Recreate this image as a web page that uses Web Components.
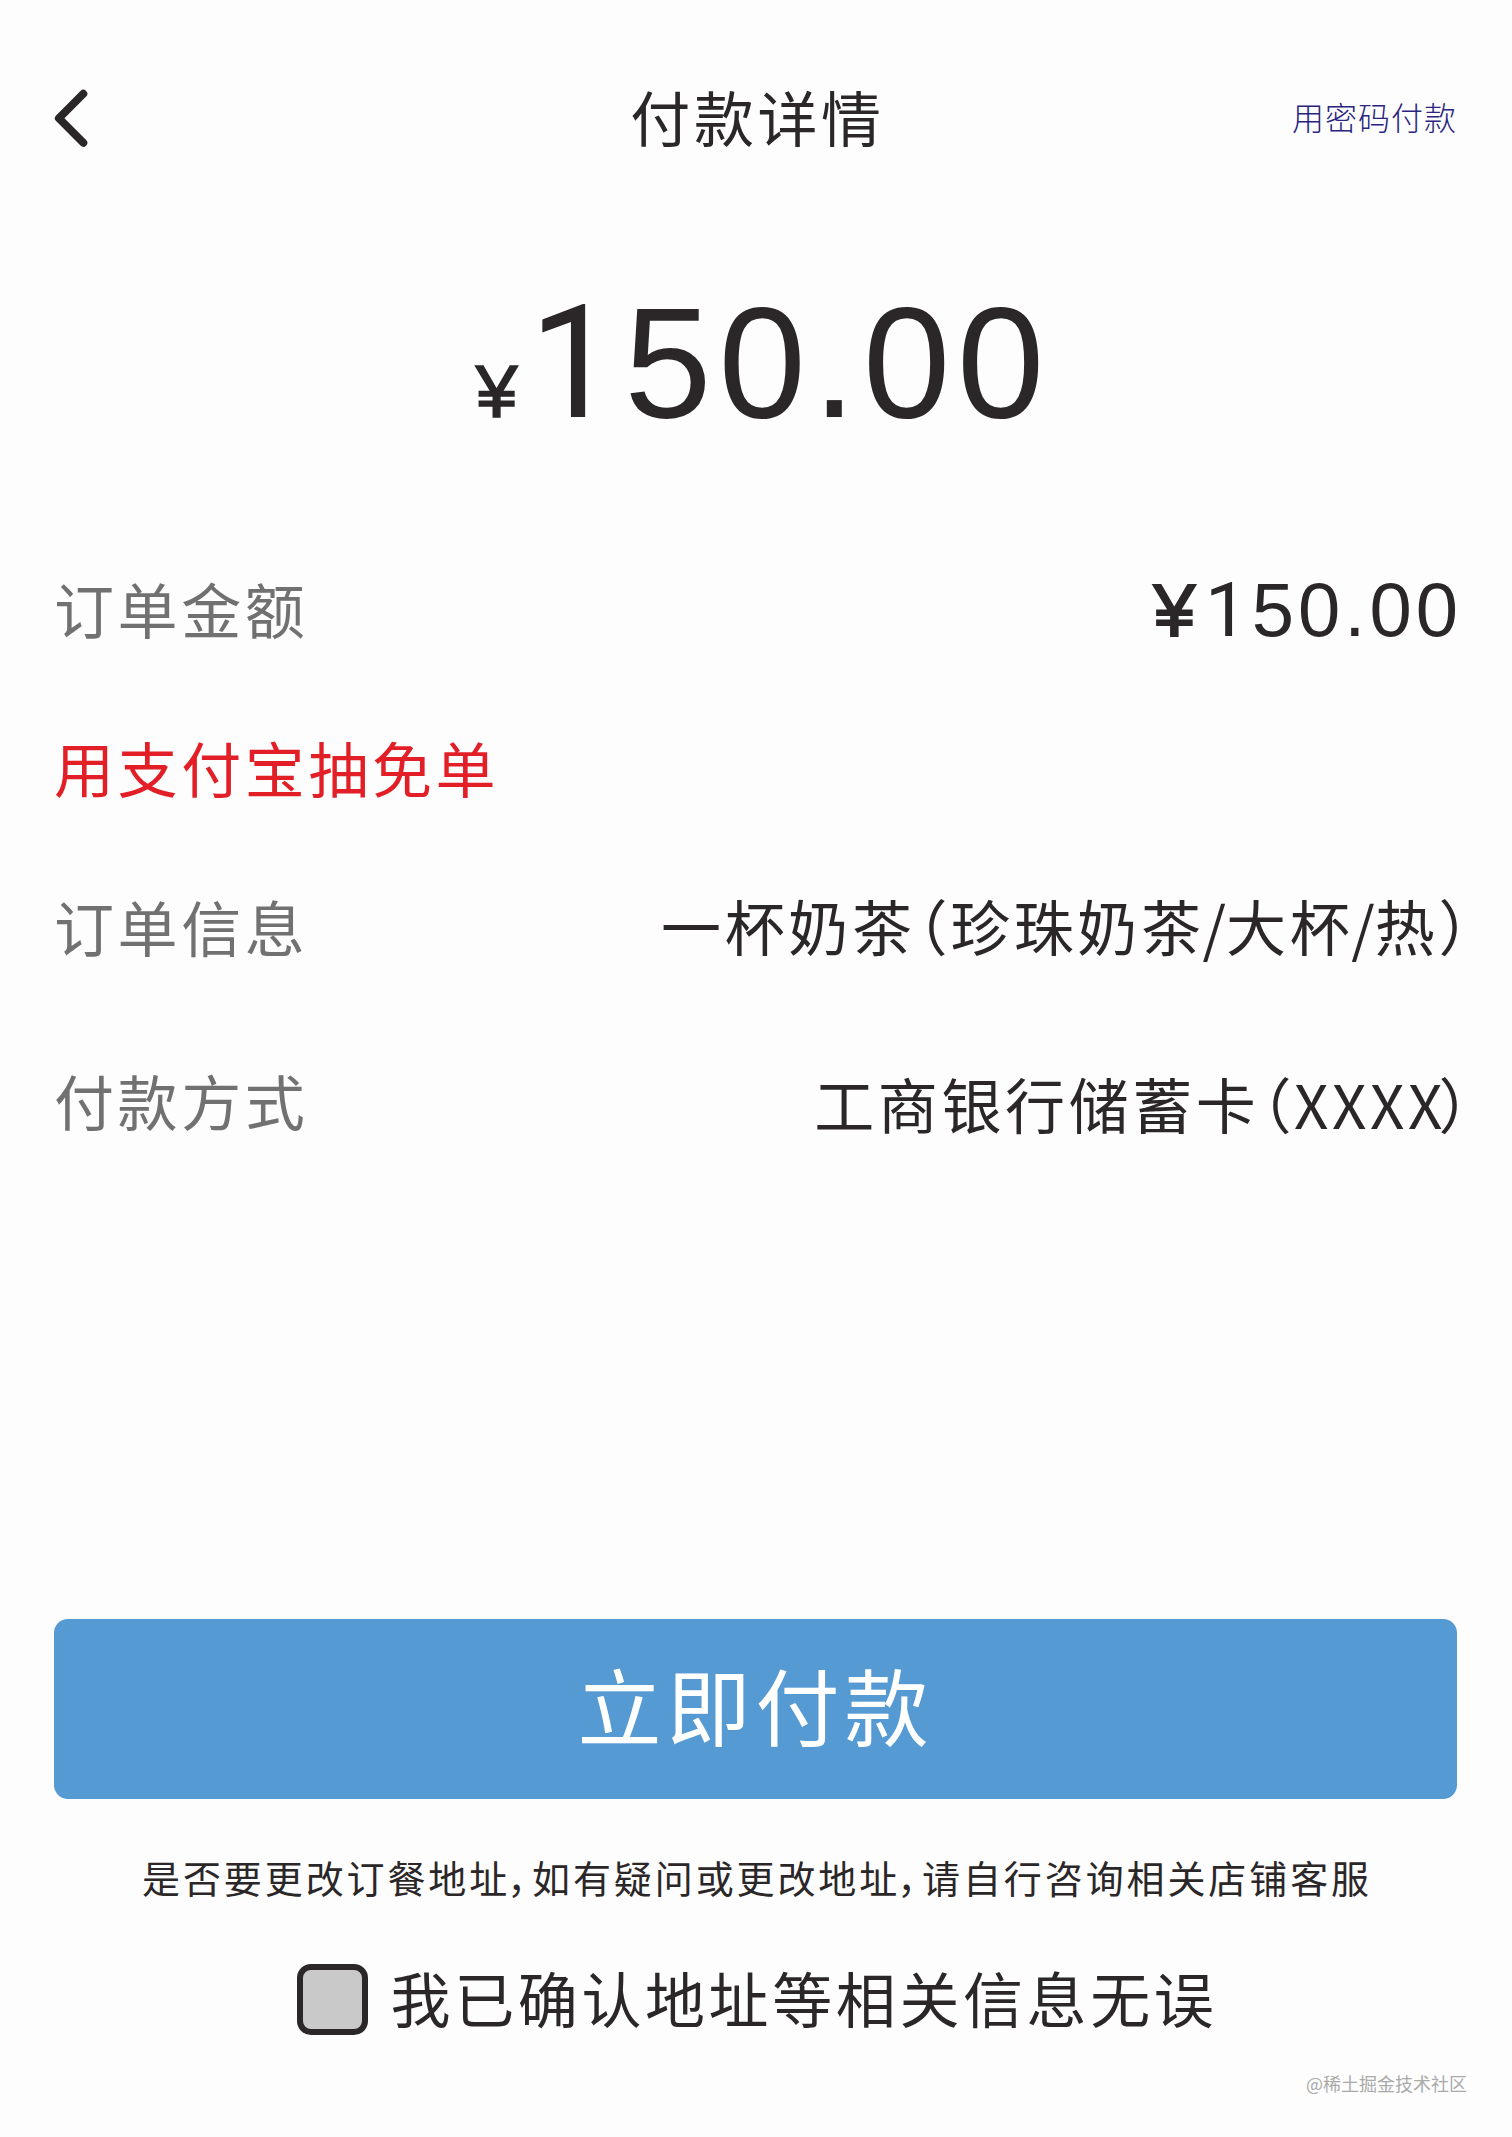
<!DOCTYPE html>
<html lang="zh-CN">
<head>
<meta charset="UTF-8">
<title>付款详情</title>
<style>
  body {
    margin: 0;
    background: #fdfdfd;
    color: #2b2728;
    font-family: "Noto Sans CJK SC", sans-serif;
  }
</style>
</head>
<body>
<payment-page></payment-page>

<script>
class PaymentHeader extends HTMLElement {
  constructor() {
    super();
    this.attachShadow({ mode: 'open' });
    this.shadowRoot.innerHTML = `
      <style>
        :host {
          display: grid;
          grid-template-columns: 1fr auto 1fr;
          align-items: center;
          height: 90px;
        }
        svg { display: block; }
        .title { font-size: 60px; letter-spacing: 3.6px; line-height: 84px; padding: 0 0 4px 4px; }
        .action { justify-self: end; font-size: 32px; letter-spacing: 1px; color: #2a2480; font-weight: 300; padding-bottom: 5px; }
      </style>
      <svg width="36" height="60" viewBox="0 0 36 60" fill="none" stroke="#2b2728" stroke-width="8" stroke-linecap="round" stroke-linejoin="round">
        <path d="M29.3 5.8 L4.9 30.3 L29.3 54.8"/>
      </svg>
      <div class="title"><slot></slot></div>
      <div class="action"><slot name="action"></slot></div>
    `;
  }
}
customElements.define('payment-header', PaymentHeader);

// Amount in digits; the footless "1" comes from Roboto, the sign is thickened.
class MoneyText extends HTMLElement {
  constructor() {
    super();
    this.attachShadow({ mode: 'open' });
    this.shadowRoot.innerHTML = `
      <style>
        :host {
          display: inline-block;
          font-family: "Liberation Sans", Arial, sans-serif;
          font-size: 76px;
          letter-spacing: 4px;
          white-space: nowrap;
        }
        .sign { font-size: 75px; margin-right: 6px; -webkit-text-stroke: 2px currentColor; }
        .one { font-family: Roboto, sans-serif; }
        :host([large]) { font-size: 157px; letter-spacing: 6.8px; }
        :host([large]) .sign { margin-right: 5px; -webkit-text-stroke-width: 1.6px; }
      </style><span class="sign">¥</span><span class="one">1</span>50.00`;
  }
}
customElements.define('money-text', MoneyText);

class DetailRow extends HTMLElement {
  constructor() {
    super();
    this.attachShadow({ mode: 'open' });
    this.shadowRoot.innerHTML = `
      <style>
        :host {
          display: flex;
          justify-content: space-between;
          align-items: center;
          height: 90px;
          font-size: 60px;
          letter-spacing: 3.6px;
          line-height: 90px;
          white-space: nowrap;
        }
        .label { color: #727171; }
        .value { font-feature-settings: "halt"; }
        :host([promo]) .label { color: #e21f26; }
      </style>
      <span class="label"><slot name="label"></slot></span>
      <span class="value"><slot></slot></span>
    `;
  }
}
customElements.define('detail-row', DetailRow);

class PayButton extends HTMLElement {
  constructor() {
    super();
    this.attachShadow({ mode: 'open' });
    this.shadowRoot.innerHTML = `
      <style>
        :host { display: block; }
        button {
          display: block;
          width: 100%;
          height: 180px;
          padding: 0 0 12px;
          border: none;
          border-radius: 14px;
          background: #569ad3;
          color: white;
          font: inherit;
          font-size: 84px;
          letter-spacing: 5px;
          cursor: pointer;
        }
      </style>
      <button><slot></slot></button>
    `;
  }
}
customElements.define('pay-button', PayButton);

class ConfirmCheck extends HTMLElement {
  constructor() {
    super();
    this.attachShadow({ mode: 'open' });
    this.shadowRoot.innerHTML = `
      <style>
        :host {
          display: flex;
          justify-content: center;
          align-items: center;
          gap: 23px;
          padding-left: 3px;
          font-size: 60px;
          letter-spacing: 3.6px;
          line-height: 90px;
        }
        .box {
          box-sizing: border-box;
          width: 71px;
          height: 71px;
          border: 6px solid #2b2728;
          border-radius: 14px;
          background: #c9c9c9;
        }
        .text { padding-bottom: 4px; }
      </style>
      <span class="box"></span>
      <span class="text"><slot></slot></span>
    `;
  }
}
customElements.define('confirm-check', ConfirmCheck);

class PaymentPage extends HTMLElement {
  constructor() {
    super();
    this.attachShadow({ mode: 'open' });
    this.shadowRoot.innerHTML = `
      <style>
        :host {
          display: flex;
          flex-direction: column;
          box-sizing: border-box;
          height: 2137px;
          padding: 73px 55px 0 54px;
        }
        .amount { margin-top: 110px; height: 180px; line-height: 180px; padding-left: 16px; text-align: center; }
        .details { margin-top: 110px; }
        .details detail-row + detail-row { margin-top: 69px; }
        .details detail-row.method { margin-top: 84px; }
        .details money-text { margin-right: -5px; padding-top: 3px; }
        .info-value { position: relative; top: -1px; margin-right: -15px; }
        .method-value { position: relative; top: 3px; margin-right: -15px; }
        .open { margin: 0 -1px 0 2px; }
        .slash { margin-left: -2px; letter-spacing: 0; }
        .last { letter-spacing: -4px; }
        pay-button { margin-top: 474px; }
        .note {
          margin-top: 48px;
          padding-left: 3px;
          text-align: center;
          font-size: 38px;
          letter-spacing: 2.9px;
          line-height: 60px;
          white-space: nowrap;
          font-feature-settings: "halt";
        }
        .comma { margin: 0 3px 0 -3px; }
        confirm-check { margin-top: 45px; }
        .mark { align-self: flex-end; margin: 24px -10px 0 0; font-size: 18px; color: #aaa; }
      </style>
      <payment-header>付款详情<span slot="action">用密码付款</span></payment-header>
      <div class="amount"><money-text large></money-text></div>
      <div class="details">
        <detail-row><span slot="label">订单金额</span><money-text></money-text></detail-row>
        <detail-row promo><span slot="label">用支付宝抽免单</span></detail-row>
        <detail-row><span slot="label">订单信息</span><span class="info-value">一杯奶茶<span class="open">（</span>珍珠奶茶<span class="slash">/</span>大杯<span class="slash">/</span>热）</span></detail-row>
        <detail-row class="method"><span slot="label">付款方式</span><span class="method-value">工商银行储蓄卡<span class="open">（</span>XXX<span class="last">X</span>）</span></detail-row>
      </div>
      <pay-button>立即付款</pay-button>
      <div class="note">是否要更改订餐地址<span class="comma">，</span>如有疑问或更改地址<span class="comma">，</span>请自行咨询相关店铺客服</div>
      <confirm-check>我已确认地址等相关信息无误</confirm-check>
      <div class="mark">@稀土掘金技术社区</div>
    `;
  }
}
customElements.define('payment-page', PaymentPage);
</script>
</body>
</html>
